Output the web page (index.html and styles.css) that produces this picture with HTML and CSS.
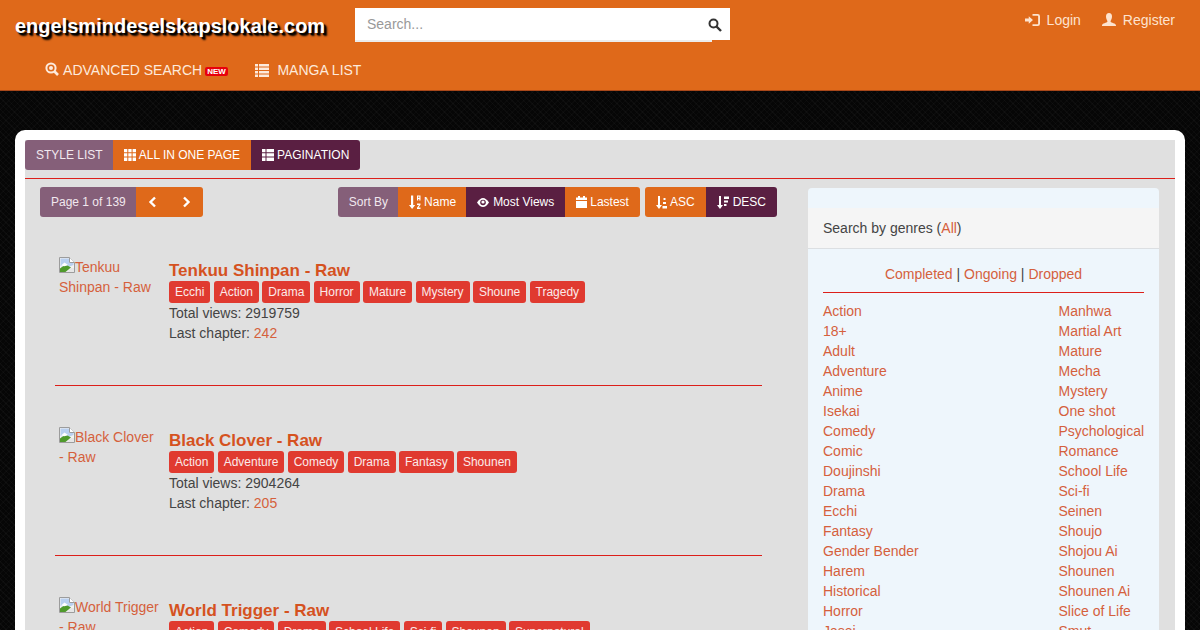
FILE: index.html
```html
<!DOCTYPE html>
<html lang="en">
<head>
<meta charset="utf-8">
<title>engelsmindeselskapslokale.com</title>
<link rel="stylesheet" href="styles.css">
</head>
<body>
<svg class="defs" aria-hidden="true">
  <symbol id="broken" viewBox="0 0 16 16">
    <path d="M.5.5h10l5 5v10H.5z" fill="#f2f2f2" stroke="#9c9c9c"/>
    <path d="M10.500.5v5h5" fill="#fff" stroke="#9c9c9c"/>
    <path d="M1.500 1.500h8.500v4.500h4.500v2L8 10.500 1.500 9z" fill="#b9d0f0"/>
    <path d="M1 15v-3.500C3.500 9 6 8 8.500 8.500L12 10.500 6.500 15z" fill="#4f9a2c"/>
    <path d="M2 8.500l3.500-3 3.500 2.500-3.500 1.200z" fill="#fff"/>
    <path d="M11.500 11H15v4H8z" fill="#e6e6e6"/>
  </symbol>
</svg>
<div class="page">
  <header class="topbar">
    <div class="top-row">
      <a class="brand">engelsmindeselskapslokale.com</a>
      <form class="search">
        <span class="search-input">Search...</span>
        <span class="search-btn">
          <svg width="14" height="14" viewBox="0 0 14 14"><circle cx="5.500" cy="5.500" r="4" fill="none" stroke="#333" stroke-width="2"/><path d="M8.500 8.500L13 13" stroke="#333" stroke-width="2.400"/></svg>
        </span>
      </form>
      <nav class="account">
        <a class="account-link">
          <svg width="15" height="14" viewBox="0 0 16 14"><path d="M0 5.500h4V3l4.500 4L4 11V8.500H0z" fill="currentColor"/><path d="M8 1.500h5.500q1.500 0 1.500 1.500v8q0 1.500-1.500 1.500H8" fill="none" stroke="currentColor" stroke-width="2"/></svg>
          Login</a>
        <a class="account-link">
          <svg width="14" height="14" viewBox="0 0 14 14"><path d="M7 0c2 0 3 1.500 3 3.500S9 7 8.500 8.500c.5 1.500 5.500 1.500 5.500 4V13H0v-.5c0-2.500 5-2.500 5.500-4C5 7 4 5.500 4 3.500S5 0 7 0z" fill="currentColor"/></svg>
          Register</a>
      </nav>
    </div>
    <nav class="main-nav">
      <a class="nav-link nav-search">
        <svg width="14" height="14" viewBox="0 0 14 14"><circle cx="6" cy="6" r="4.600" fill="none" stroke="currentColor" stroke-width="2"/><circle cx="6" cy="6" r="2" fill="currentColor"/><path d="M9.500 9.500L13 13" stroke="currentColor" stroke-width="2.600"/></svg>
        ADVANCED SEARCH <span class="new-badge">NEW</span></a>
      <a class="nav-link nav-list">
        <svg width="14" height="14" viewBox="0 0 14 14"><path d="M0 1h3v2.500H0zM4 1h10v2.500H4zM0 4.500h3V7H0zM4 4.500h10V7H4zM0 8h3v2.500H0zM4 8h10v2.500H4zM0 11.500h3V14H0zM4 11.500h10V14H4z" fill="currentColor"/></svg>
        MANGA LIST</a>
    </nav>
  </header>

  <main class="card">
    <div class="panel">
      <div class="btn-group">
        <span class="btn btn-label">STYLE LIST</span>
        <a class="btn btn-orange">
          <svg width="12" height="12" viewBox="0 0 12 12"><path d="M0 0h3.300v3.300H0zM4.300 0h3.300v3.300H4.300zM8.600 0H12v3.300H8.600zM0 4.300h3.300v3.300H0zM4.300 4.300h3.300v3.300H4.300zM8.600 4.300H12v3.300H8.600zM0 8.600h3.300V12H0zM4.300 8.600h3.300V12H4.300zM8.600 8.600H12V12H8.600z" fill="currentColor"/></svg>
          ALL IN ONE PAGE</a>
        <a class="btn btn-plum">
          <svg width="12" height="12" viewBox="0 0 12 12"><path d="M0 0h3.500v3.300H0zM4.500 0H12v3.300H4.500zM0 4.300h3.500v3.300H0zM4.500 4.300H12v3.300H4.500zM0 8.600h3.500V12H0zM4.500 8.600H12V12H4.500z" fill="currentColor"/></svg>
          PAGINATION</a>
      </div>
      <hr class="rule rule-top">
      <div class="columns">
        <section class="listing">
          <div class="toolbar">
            <div class="btn-group">
              <span class="btn btn-label">Page 1 of 139</span>
              <a class="btn btn-orange btn-arrow"><svg width="9" height="12" viewBox="0 0 9 12"><path d="M7 1.500L2.500 6 7 10.500" fill="none" stroke="currentColor" stroke-width="2.400"/></svg></a>
              <a class="btn btn-orange btn-arrow btn-arrow-next"><svg width="9" height="12" viewBox="0 0 9 12"><path d="M2 1.500L6.500 6 2 10.500" fill="none" stroke="currentColor" stroke-width="2.400"/></svg></a>
            </div>
            <div class="sort-groups">
              <div class="btn-group">
                <span class="btn btn-label">Sort By</span>
                <a class="btn btn-orange btn-name">
                  <svg width="12" height="14" viewBox="0 0 12 14"><path d="M2 .5h2.200V10h2L3.100 14 0 10h2z" fill="currentColor"/><path d="M8 .5h3.500v5h-1.200V4H9.200v1.500H8zM9.200 1.500V3h1.100V1.500zM8 8.500h3.500v1.200L9.500 12.500h2V14H8v-1.200l2-2.800H8z" fill="currentColor"/></svg>
                  Name</a>
                <a class="btn btn-plum btn-wide">
                  <svg width="12" height="9" viewBox="0 0 12 9"><path d="M0 4.500C2 1.500 4 0 6 0s4 1.500 6 4.500C10 7.500 8 9 6 9S2 7.500 0 4.500z" fill="currentColor"/><circle cx="6" cy="4.500" r="2.800" fill="#5a1f42"/><circle cx="6" cy="4" r="1.600" fill="currentColor"/></svg>
                  Most Views</a>
                <a class="btn btn-orange">
                  <svg width="11" height="12" viewBox="0 0 11 12"><path d="M0 1.500h2V0h2v1.500h3V0h2v1.500h2V4H0zM0 5h11v7H0z" fill="currentColor"/></svg>
                  Lastest</a>
              </div>
              <div class="btn-group">
                <a class="btn btn-orange">
                  <svg width="11" height="13" viewBox="0 0 11 13"><path d="M2 0h2v9h2l-3 4-3-4h2z" fill="currentColor"/><path d="M7.500 2h2v2h-2zM7 6h3v2H7zM6.500 10H11v2.500H6.500z" fill="currentColor"/></svg>
                  ASC</a>
                <a class="btn btn-plum btn-wide">
                  <svg width="12" height="13" viewBox="0 0 12 13"><path d="M2 0h2v9h2l-3 4-3-4h2z" fill="currentColor"/><path d="M7 .5h5V3H7zM7 4.500h4v2H7zM7 8h2.500v2H7z" fill="currentColor"/></svg>
                  DESC</a>
              </div>
            </div>
          </div>

          <article class="item">
            <div class="item-row">
              <a class="cover"><svg class="broken-icon"><use href="#broken"/></svg>Tenkuu Shinpan - Raw</a>
              <div class="info">
                <h3 class="item-title">Tenkuu Shinpan - Raw</h3>
                <div class="tags"><a class="tag">Ecchi</a><a class="tag">Action</a><a class="tag">Drama</a><a class="tag">Horror</a><a class="tag">Mature</a><a class="tag">Mystery</a><a class="tag">Shoune</a><a class="tag">Tragedy</a></div>
                <p class="meta">Total views: 2919759</p>
                <p class="meta">Last chapter: <a class="link">242</a></p>
              </div>
            </div>
            <hr class="rule">
          </article>
          <article class="item">
            <div class="item-row">
              <a class="cover"><svg class="broken-icon"><use href="#broken"/></svg>Black Clover - Raw</a>
              <div class="info">
                <h3 class="item-title">Black Clover - Raw</h3>
                <div class="tags"><a class="tag">Action</a><a class="tag">Adventure</a><a class="tag">Comedy</a><a class="tag">Drama</a><a class="tag">Fantasy</a><a class="tag">Shounen</a></div>
                <p class="meta">Total views: 2904264</p>
                <p class="meta">Last chapter: <a class="link">205</a></p>
              </div>
            </div>
            <hr class="rule">
          </article>
          <article class="item">
            <div class="item-row">
              <a class="cover"><svg class="broken-icon"><use href="#broken"/></svg>World Trigger - Raw</a>
              <div class="info">
                <h3 class="item-title">World Trigger - Raw</h3>
                <div class="tags"><a class="tag">Action</a><a class="tag">Comedy</a><a class="tag">Drama</a><a class="tag">School Life</a><a class="tag">Sci-fi</a><a class="tag">Shounen</a><a class="tag">Supernatural</a></div>
              </div>
            </div>
          </article>
        </section>

        <aside class="sidebar">
          <div class="side-head">Search by genres (<a class="link">All</a>)</div>
          <div class="side-body">
            <div class="status"><a class="link">Completed</a> | <a class="link">Ongoing</a> | <a class="link">Dropped</a></div>
            <hr class="rule rule-side">
            <div class="genres">
              <ul class="genre-col">
                <li><a class="link">Action</a></li><li><a class="link">18+</a></li><li><a class="link">Adult</a></li><li><a class="link">Adventure</a></li><li><a class="link">Anime</a></li><li><a class="link">Isekai</a></li><li><a class="link">Comedy</a></li><li><a class="link">Comic</a></li><li><a class="link">Doujinshi</a></li><li><a class="link">Drama</a></li><li><a class="link">Ecchi</a></li><li><a class="link">Fantasy</a></li><li><a class="link">Gender Bender</a></li><li><a class="link">Harem</a></li><li><a class="link">Historical</a></li><li><a class="link">Horror</a></li><li><a class="link">Jasei</a></li>
              </ul>
              <ul class="genre-col">
                <li><a class="link">Manhwa</a></li><li><a class="link">Martial Art</a></li><li><a class="link">Mature</a></li><li><a class="link">Mecha</a></li><li><a class="link">Mystery</a></li><li><a class="link">One shot</a></li><li><a class="link">Psychological</a></li><li><a class="link">Romance</a></li><li><a class="link">School Life</a></li><li><a class="link">Sci-fi</a></li><li><a class="link">Seinen</a></li><li><a class="link">Shoujo</a></li><li><a class="link">Shojou Ai</a></li><li><a class="link">Shounen</a></li><li><a class="link">Shounen Ai</a></li><li><a class="link">Slice of Life</a></li><li><a class="link">Smut</a></li>
              </ul>
            </div>
          </div>
        </aside>
      </div>
    </div>
  </main>
</div>
</body>
</html>
```
FILE: styles.css
```css
* { box-sizing: border-box; }
html, body { margin: 0; height: 100%; overflow: hidden; }
body {
  font-family: "Liberation Sans", Arial, sans-serif;
  font-size: 14px;
  line-height: 20px;
  color: #444;
  background-color: #060606;
  background-image:
    repeating-linear-gradient(45deg, rgba(255,255,255,.028) 0 1px, transparent 1px 4px),
    repeating-linear-gradient(-45deg, rgba(255,255,255,.018) 0 1px, transparent 1px 4px);
}
.defs { position: absolute; width: 0; height: 0; }
.page { height: 630px; overflow: hidden; }
svg { vertical-align: -1px; }

.topbar {
  height: 91px;
  background: #df691a;
  border-bottom: 1px solid #a9481a;
  color: #fff;
}
.top-row { display: flex; align-items: flex-start; height: 50px; padding: 8px 25px 0 15px; }
.brand {
  width: 340px;
  margin-top: 6px;
  font-size: 20px;
  line-height: 24px;
  font-weight: 700;
  white-space: nowrap;
  color: #fff;
  text-shadow: 2px 2px 1px #000, 3px 3px 2px #000;
}
.search { display: flex; width: 375px; height: 34px; }
.search-input {
  width: 357px;
  height: 34px;
  padding: 6px 12px;
  background: #fff;
  border-bottom: 2px solid #ececec;
  color: #999;
}
.search-btn {
  width: 18px;
  height: 32px;
  background: #fff;
  padding-top: 10px;
  line-height: 14px;
}
.search-btn svg { margin-left: -4px; }
.account { display: flex; gap: 21px; margin-left: auto; padding-top: 2px; color: #fde3cf; }
.account-link { display: flex; align-items: center; gap: 7px; height: 20px; }

.main-nav { display: flex; align-items: center; gap: 27px; height: 40px; padding: 0 0 0 45px; }
.nav-link { display: block; white-space: nowrap; color: #fdeadc; }
.nav-link svg { margin-right: 1px; }
.nav-list svg { margin-right: 4.500px; vertical-align: -2px; }
.new-badge {
  display: inline-block;
  width: 23px;
  height: 9px;
  margin-left: -1px;
  background: #e8000b;
  border-radius: 2px;
  color: #fff;
  font-size: 8px;
  font-weight: 700;
  line-height: 9px;
  text-align: center;
  vertical-align: 1px;
}

.card {
  margin: 39px 15px 0;
  padding: 10px 10px 0;
  height: 520px;
  background: #fff;
  border-radius: 10px 10px 0 0;
}
.panel { height: 510px; background: #e0e0e0; }
.btn-group { display: inline-flex; height: 30px; border-radius: 3px; overflow: hidden; }
.btn {
  display: flex;
  align-items: center;
  gap: 3px;
  height: 30px;
  padding: 0 11px;
  font-size: 12px;
  line-height: 18px;
  color: #fff;
  white-space: nowrap;
}
.btn-label { background: #855f79; color: #f1e8ee; margin-right: -1px; }
.btn-orange { background: #df691a; }
.btn-plum { background: #5a1f42; }
.btn-wide { gap: 4px; }
.btn-name { margin-right: -1px; }
.btn-arrow { width: 33px; justify-content: center; padding: 0; }
.btn-arrow-next { width: 34px; padding-left: 1px; }

.rule { display: block; height: 1px; margin: 0; border: 0; background: #dc1f1a; }
.rule-top { margin-top: 8px; }
.rule-side { margin-bottom: 8px; }

.columns { display: flex; padding-left: 15px; padding-top: 8px; }
.listing { width: 737px; }
.toolbar { display: flex; justify-content: space-between; margin-bottom: 40px; }
.sort-groups { display: flex; gap: 5px; }

.item { width: 707px; height: 129px; margin: 0 15px 41px; }
.item-row { display: flex; height: 128px; padding-left: 4px; }
.cover { display: block; width: 110px; padding-right: 8px; flex: none; color: #d5603c; }
.broken-icon { width: 16px; height: 16px; vertical-align: -1px; }
.info { padding-top: 3px; }
.item-title { margin: 0; font-size: 17px; line-height: 21px; font-weight: 700; color: #d5521f; }
.tags { display: flex; gap: 3.300px; }
.tag {
  height: 22px;
  padding: 0 6px;
  background: #e03a30;
  border-radius: 3px;
  color: #fbeaea;
  font-size: 12px;
  line-height: 22px;
}
.meta { margin: 0; }
.link { color: #d5603c; }

.sidebar {
  width: 351px;
  margin-left: 31px;
  margin-top: 1px;
  height: 460px;
  padding-top: 20px;
  background: #eef6fc;
  border-radius: 4px 4px 0 0;
}
.side-head { height: 41px; padding: 10px 15px; background: #f5f5f5; border-bottom: 1px solid #dcdfe2; }
.side-body { padding: 15px 15px 0; }
.status { height: 28px; text-align: center; }
.genres { display: flex; justify-content: space-between; }
.genre-col { list-style: none; margin: 0; padding: 0; }
.genre-col:last-child { width: 85.500px; white-space: nowrap; }
```
